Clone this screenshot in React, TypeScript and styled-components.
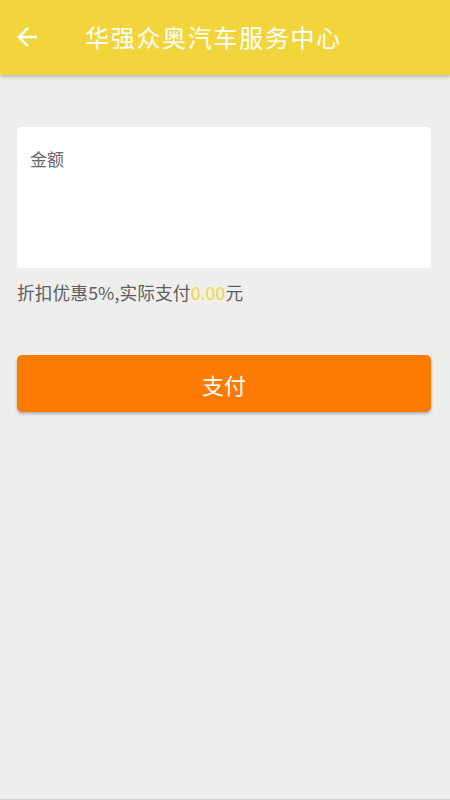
import React from 'react'
import styled, { createGlobalStyle } from 'styled-components'

const GlobalStyle = createGlobalStyle`
  html, body {
    margin: 0;
    padding: 0;
    background: #eeeeec;
  }
  body {
    font-family: 'Noto Sans CJK SC', sans-serif;
  }
`

const Page = styled.div`
  width: 450px;
  height: 800px;
  display: flex;
  flex-direction: column;
  background: #eeeeec;
  border-bottom: 1px solid #cfcfcd;
  box-sizing: border-box;
`

const Header = styled.header`
  height: 75px;
  background: #f2d53c;
  display: flex;
  align-items: center;
  padding: 0 0 0 12px;
  box-shadow: 0 2px 3px rgba(0, 0, 0, 0.22);
  position: relative;
  z-index: 1;
`

const BackButton = styled.button`
  width: 30px;
  height: 30px;
  padding: 0;
  border: none;
  background: transparent;
  display: flex;
  align-items: center;
  justify-content: center;
  margin-right: 43px;
  margin-top: -1px;
`

const Title = styled.h1`
  margin: 0 0 2px 0;
  font-family: 'Noto Sans CJK SC', sans-serif;
  font-weight: 400;
  font-size: 24px;
  letter-spacing: 1.7px;
  color: #fff;
`

const Content = styled.main`
  padding: 52px 19px 0 17px;
  display: flex;
  flex-direction: column;
`

const AmountCard = styled.div`
  height: 141px;
  background: #fff;
  border-radius: 4px;
  padding: 20px 13px;
  box-sizing: border-box;
`

const AmountLabel = styled.div`
  font-family: 'Noto Sans CJK SC', sans-serif;
  font-size: 17px;
  color: #6b6b6b;
  line-height: 24px;
`

const Hint = styled.p`
  margin: 11px 0 0 0;
  font-family: 'Noto Sans CJK SC', sans-serif;
  font-size: 17.7px;
  letter-spacing: 0.1px;
  color: #5e5e5e;
  line-height: 26px;
`

const Money = styled.span`
  color: #f2d53c;
`

const PayButton = styled.button`
  margin-top: 50px;
  height: 57px;
  border: none;
  border-radius: 5px;
  background: #ff7a00;
  color: #fff;
  font-family: 'Noto Sans CJK SC', sans-serif;
  font-size: 22px;
  box-shadow: 0 2px 3px rgba(0, 0, 0, 0.25);
`

const BackArrow = () => (
  <svg width="30" height="30" viewBox="0 0 24 24">
    <path d="M20 11H7.83l5.59-5.59L12 4l-8 8 8 8 1.41-1.41L7.83 13H20v-2z" fill="#fff" />
  </svg>
)

export default function App() {
  return (
    <>
      <GlobalStyle />
      <Page>
        <Header>
          <BackButton aria-label="back">
            <BackArrow />
          </BackButton>
          <Title>华强众奥汽车服务中心</Title>
        </Header>
        <Content>
          <AmountCard>
            <AmountLabel>金额</AmountLabel>
          </AmountCard>
          <Hint>
            折扣优惠5%,实际支付<Money>0.00</Money>元
          </Hint>
          <PayButton>支付</PayButton>
        </Content>
      </Page>
    </>
  )
}
